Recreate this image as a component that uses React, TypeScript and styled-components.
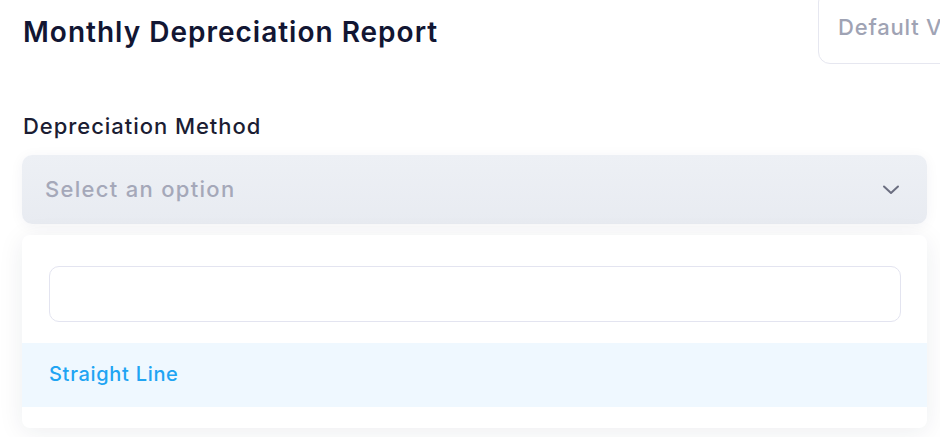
import { useState } from "react";
import styled, { createGlobalStyle } from "styled-components";

const GlobalStyle = createGlobalStyle`
  body {
    margin: 0;
    background: #ffffff;
    font-family: "Inter", "Noto Sans", sans-serif;
  }
`;

const options = ["Straight Line"];

const App = () => {
  const [query, setQuery] = useState("");

  return (
    <>
      <GlobalStyle />
      <Page>
        <Header>
          <Title>Monthly Depreciation Report</Title>
          <ViewButton>Default View</ViewButton>
        </Header>
        <Field>
          <Label>Depreciation Method</Label>
          <Select>
            <Placeholder>Select an option</Placeholder>
            <svg width="18" height="10" viewBox="0 0 18 10" fill="none">
              <path
                d="M2 1.5L9 8L16 1.5"
                stroke="#6b6e80"
                strokeWidth="2"
                strokeLinecap="round"
                strokeLinejoin="round"
              />
            </svg>
          </Select>
          <Menu>
            <Search value={query} onChange={(e) => setQuery(e.target.value)} />
            <List>
              {options.map((option, i) => (
                <Option key={option} $active={i === 0}>
                  {option}
                </Option>
              ))}
            </List>
          </Menu>
        </Field>
      </Page>
    </>
  );
};

const Page = styled.div`
  width: 940px;
  height: 437px;
  overflow: hidden;
  box-sizing: border-box;
  padding: 0 13px 0 22px;
`;

const Header = styled.div`
  display: flex;
  align-items: center;
  height: 64px;
`;

const Title = styled.h1`
  flex: 0 0 795px;
  margin: 0;
  padding-left: 1px;
  font-size: 28px;
  font-weight: 600;
  color: #121633;
  letter-spacing: 1px;
`;

const ViewButton = styled.button`
  flex-shrink: 0;
  height: 74px;
  margin-top: -10px;
  padding: 0 21px 0 19px;
  border: 1.5px solid #e6e7f0;
  border-radius: 12px;
  background: #ffffff;
  font-family: inherit;
  font-size: 22px;
  font-weight: 500;
  letter-spacing: 0.8px;
  color: #9fa3b4;
  white-space: nowrap;
`;

const Field = styled.div`
  display: flex;
  flex-direction: column;
  padding-top: 47px;
`;

const Label = styled.label`
  padding-left: 1px;
  font-size: 22px;
  font-weight: 500;
  letter-spacing: 0.95px;
  color: #1b1d33;
  line-height: 30px;
`;

const Select = styled.div`
  display: flex;
  align-items: center;
  justify-content: space-between;
  height: 69px;
  margin-top: 14px;
  padding: 0 27px 0 23px;
  border-radius: 10px;
  background: linear-gradient(180deg, #edf0f5 0%, #e8ebf1 100%);
  box-shadow: 0 2px 14px rgba(30, 40, 70, 0.05);
`;

const Placeholder = styled.span`
  margin-top: -2px;
  font-size: 22px;
  font-weight: 500;
  letter-spacing: 1.3px;
  color: #a5a8b9;
`;

const Menu = styled.div`
  display: flex;
  flex-direction: column;
  gap: 21px;
  margin-top: 11px;
  padding: 31px 0 21px;
  border-radius: 8px;
  background: #ffffff;
  box-shadow: 0 4px 26px rgba(30, 40, 70, 0.08);
`;

const Search = styled.input`
  height: 56px;
  margin: 0 26px 0 27px;
  box-sizing: border-box;
  border: 1.5px solid #e3e4f0;
  border-radius: 10px;
  outline: none;
  font-family: inherit;
  font-size: 18px;
`;

const List = styled.div`
  display: flex;
  flex-direction: column;
`;

const Option = styled.div<{ $active?: boolean }>`
  display: flex;
  align-items: center;
  height: 64px;
  padding: 0 0 2px 27px;
  box-sizing: border-box;
  font-size: 20px;
  font-weight: 500;
  letter-spacing: 0.7px;
  color: ${(p) => (p.$active ? "#20a4f3" : "#1b1d33")};
  background: ${(p) => (p.$active ? "#eff8ff" : "transparent")};
`;

export default App;
